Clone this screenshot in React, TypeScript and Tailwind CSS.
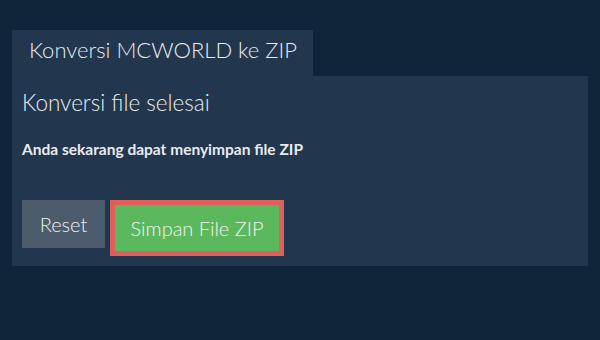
export default function App() {
  return (
    <div
      className="h-[340px] w-[600px] bg-[#10243a] px-[12px] pt-[30px] text-[#e8ecef]"
      style={{ fontFamily: "Lato, 'Open Sans', sans-serif" }}
    >
      <div className="flex">
        <div className="h-[46px] bg-[#22374d] pl-[17px] pr-[16px] pt-[7px] text-[22px] font-light leading-[1.2]">
          Konversi MCWORLD ke ZIP
        </div>
      </div>
      <div className="h-[190px] bg-[#22374d] px-[10px] pt-[13px]">
        <h2 className="text-[22.5px] font-light leading-[1.2]">Konversi file selesai</h2>
        <p className="mt-[24px] text-[15.5px] font-bold leading-[1.2]">
          Anda sekarang dapat menyimpan file ZIP
        </p>
        <div className="mt-[41px] flex items-start gap-[5px]">
          <button className="h-[48px] w-[83px] bg-[#4c5c6d] text-[20px] font-light text-[#f0f0f0]">
            Reset
          </button>
          <button className="h-[56px] w-[174px] border-[5px] border-[#df5f5b] bg-[#5cb85c] text-[20px] font-light text-[#f4f4f4]">
            Simpan File ZIP
          </button>
        </div>
      </div>
    </div>
  )
}
